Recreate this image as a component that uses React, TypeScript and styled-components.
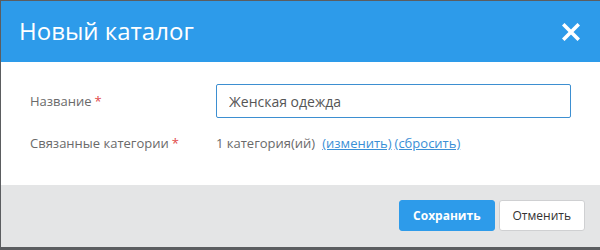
import React from "react";
import styled, { createGlobalStyle } from "styled-components";

const Global = createGlobalStyle`
  html, body { margin: 0; padding: 0; background: #5b5d60; }
  body { font-family: "Open Sans", "Liberation Sans", sans-serif; }
  #root { width: 600px; height: 250px; }
`;

const Backdrop = styled.div`
  width: 600px;
  height: 250px;
  box-sizing: border-box;
  padding: 1px 0 3px 1px;
  background: #5b5d60;
`;

const Modal = styled.div`
  height: 100%;
  display: flex;
  flex-direction: column;
  background: #fff;
`;

const Header = styled.div`
  height: 61px;
  flex: none;
  background: #2d9bea;
  display: flex;
  align-items: center;
  justify-content: space-between;
  padding: 0 20px 0 18px;
`;

const Title = styled.h1`
  margin: 0;
  font-size: 24px;
  font-weight: 400;
  color: #fff;
  line-height: 1;
  padding-bottom: 2px;
`;

const Close = styled.button`
  border: none;
  background: none;
  padding: 0;
  width: 18px;
  height: 18px;
  display: flex;
  cursor: pointer;
`;

const Body = styled.div`
  flex: 1;
  padding: 22px 28px 0 29px;
  display: flex;
  flex-direction: column;
  gap: 9px;
`;

const Row = styled.div<{ $h: number }>`
  display: grid;
  grid-template-columns: 186px 355px;
  align-items: center;
  min-height: ${(p) => p.$h}px;
`;

const Label = styled.span`
  font-size: 13px;
  color: #6a6a6a;
`;

const Req = styled.span`
  color: #e14a4a;
  margin-left: 3px;
`;

const Input = styled.input`
  box-sizing: border-box;
  width: 355px;
  height: 34px;
  border: 1px solid #3d8fd1;
  border-radius: 2px;
  padding: 0 12px;
  font-family: inherit;
  font-size: 14px;
  color: #555;
  outline: none;
`;

const Value = styled.span`
  font-size: 13px;
  color: #6a6a6a;
  display: flex;
  gap: 3px;
`;

const Link = styled.a`
  color: #3a8fd6;
  text-decoration: underline;
  cursor: pointer;
  &:first-of-type { margin-left: 4px; }
`;

const Footer = styled.div`
  height: 61px;
  flex: none;
  background: #e4e5e6;
  display: flex;
  align-items: center;
  justify-content: flex-end;
  gap: 4px;
  padding: 0 15px 1px 0;
`;

const Button = styled.button<{ $primary?: boolean }>`
  height: 31px;
  box-sizing: border-box;
  border-radius: 3px;
  font-family: inherit;
  font-size: 12px;
  padding: 0 13px;
  font-weight: ${(p) => (p.$primary ? 700 : 400)};
  color: ${(p) => (p.$primary ? "#fff" : "#333")};
  background: ${(p) => (p.$primary ? "#2d9bea" : "#fff")};
  border: 1px solid ${(p) => (p.$primary ? "#2d9bea" : "#cfd0d2")};
`;

export default function App() {
  return (
    <>
      <Global />
      <Backdrop>
        <Modal>
          <Header>
            <Title>Новый каталог</Title>
            <Close aria-label="Закрыть">
              <svg width="18" height="18" viewBox="0 0 18 18">
                <path d="M2.5 2.5 L15.5 15.5 M15.5 2.5 L2.5 15.5" stroke="#fff" strokeWidth="3.6" strokeLinecap="square" />
              </svg>
            </Close>
          </Header>
          <Body>
            <Row $h={34}>
              <Label>
                Название<Req>*</Req>
              </Label>
              <Input defaultValue="Женская одежда" />
            </Row>
            <Row $h={32}>
              <Label>
                Связанные категории<Req>*</Req>
              </Label>
              <Value>
                1 категория(ий)
                <Link>(изменить)</Link>
                <Link>(сбросить)</Link>
              </Value>
            </Row>
          </Body>
          <Footer>
            <Button $primary>Сохранить</Button>
            <Button>Отменить</Button>
          </Footer>
        </Modal>
      </Backdrop>
    </>
  );
}
